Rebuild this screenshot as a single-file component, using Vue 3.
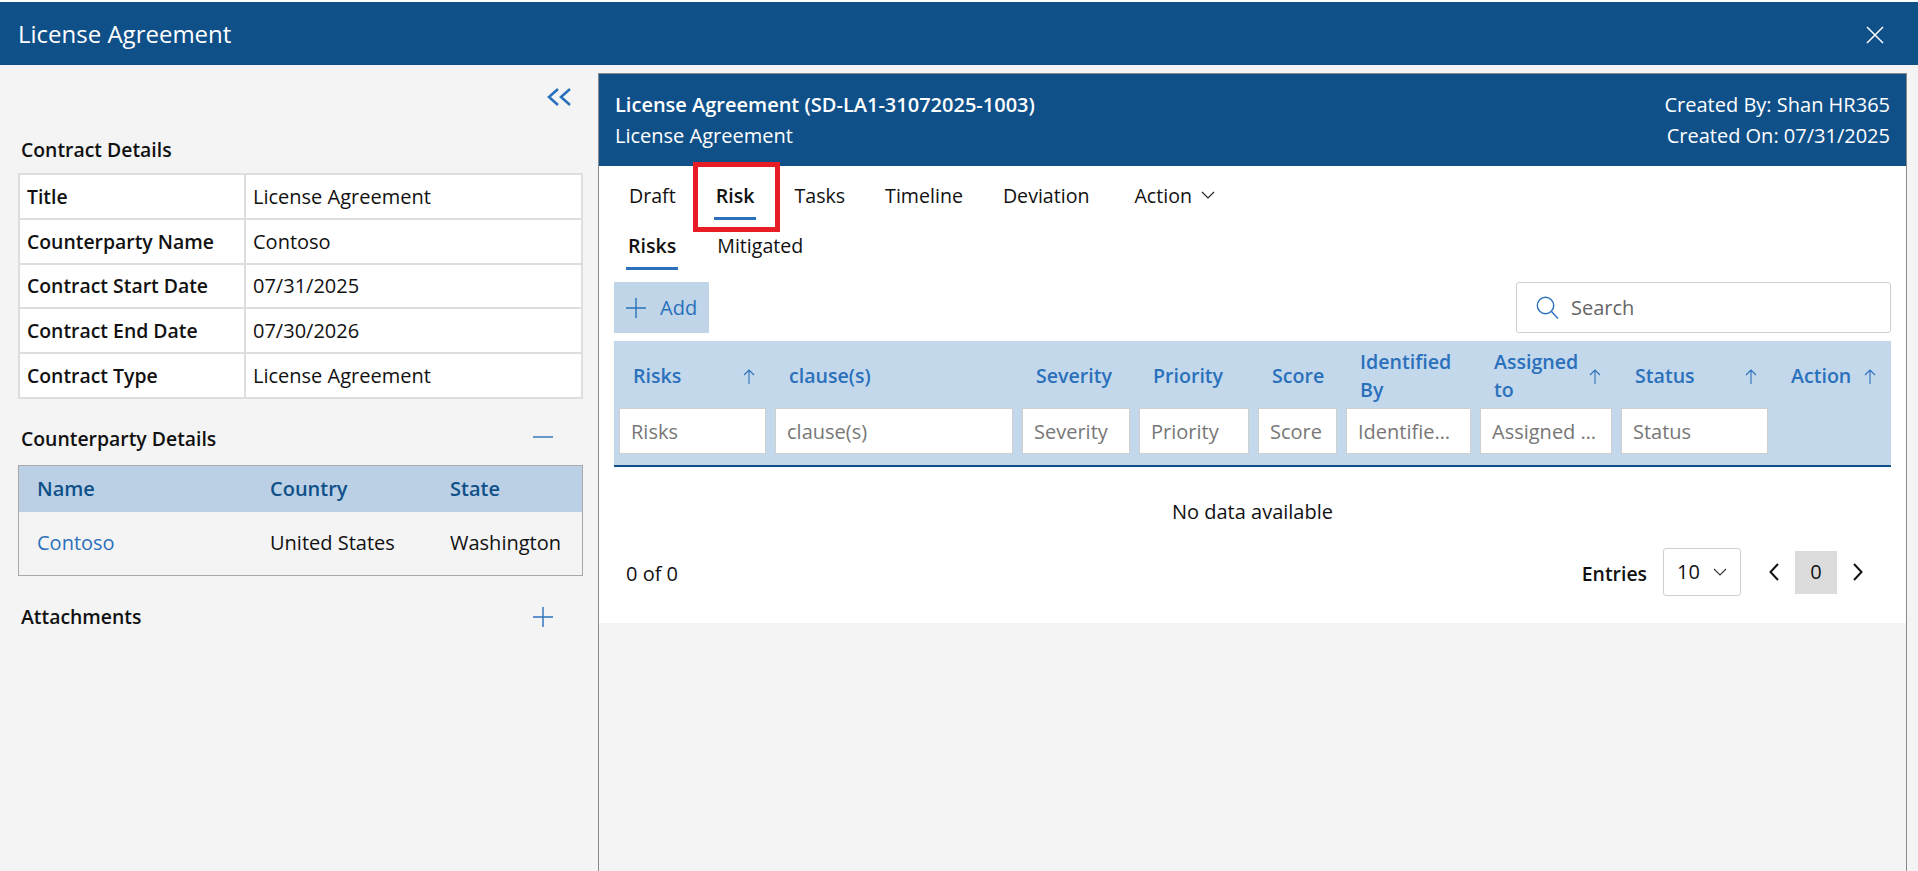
<script setup>
const contractRows = [
  { label: 'Title', value: 'License Agreement' },
  { label: 'Counterparty Name', value: 'Contoso' },
  { label: 'Contract Start Date', value: '07/31/2025' },
  { label: 'Contract End Date', value: '07/30/2026' },
  { label: 'Contract Type', value: 'License Agreement' },
];

const tabs = ['Draft', 'Risk', 'Tasks', 'Timeline', 'Deviation'];

const columns = [
  { label: 'Risks', filter: 'Risks', sort: true },
  { label: 'clause(s)', filter: 'clause(s)' },
  { label: 'Severity', filter: 'Severity' },
  { label: 'Priority', filter: 'Priority' },
  { label: 'Score', filter: 'Score' },
  { label: 'Identified By', filter: 'Identified By' },
  { label: 'Assigned to', filter: 'Assigned to', sort: true },
  { label: 'Status', filter: 'Status', sort: true },
  { label: 'Action', sort: true },
];
</script>

<template>
  <div class="page">
    <header class="app-bar">
      <span class="app-title">License Agreement</span>
      <svg class="close-icon" width="18" height="18" viewBox="0 0 18 18">
        <path d="M1 1l16 16M17 1L1 17" fill="none" stroke="#fff" stroke-width="1.5" />
      </svg>
    </header>

    <div class="content">
      <aside class="side">
        <div class="collapse-row">
          <svg width="24" height="18" viewBox="0 0 24 18">
            <path d="M11 1L2 9l9 8M23 1l-9 8 9 8" fill="none" stroke="#2a70bb" stroke-width="2.6" />
          </svg>
        </div>

        <h3 class="section-title first">Contract Details</h3>
        <table class="details-table">
          <tbody>
            <tr v-for="row in contractRows" :key="row.label">
              <th>{{ row.label }}</th>
              <td>{{ row.value }}</td>
            </tr>
          </tbody>
        </table>

        <div class="section-row">
          <h3 class="section-title">Counterparty Details</h3>
          <svg width="20" height="20" viewBox="0 0 20 20">
            <path d="M0 8h20" stroke="#2a70bb" stroke-width="1.4" />
          </svg>
        </div>
        <table class="party-table">
          <thead>
            <tr>
              <th class="col-name">Name</th>
              <th class="col-country">Country</th>
              <th>State</th>
            </tr>
          </thead>
          <tbody>
            <tr>
              <td class="party-link">Contoso</td>
              <td>United States</td>
              <td>Washington</td>
            </tr>
          </tbody>
        </table>

        <div class="section-row attachments">
          <h3 class="section-title">Attachments</h3>
          <svg width="20" height="20" viewBox="0 0 20 20">
            <path d="M0 10h20M10 0v20" stroke="#2a70bb" stroke-width="1.4" />
          </svg>
        </div>
      </aside>

      <main class="panel">
        <div class="panel-head">
          <div>
            <div class="doc-title">License Agreement (SD-LA1-31072025-1003)</div>
            <div>License Agreement</div>
          </div>
          <div class="doc-meta">
            <div>Created By: Shan HR365</div>
            <div>Created On: 07/31/2025</div>
          </div>
        </div>

        <div class="panel-body">
          <nav class="tabs">
            <span v-for="tab in tabs" :key="tab" class="tab" :class="{ active: tab === 'Risk' }">{{ tab }}</span>
            <span class="tab tab-action">
              Action
              <svg class="action-caret" width="14" height="9" viewBox="0 0 14 9">
                <path d="M1 1l6 6 6-6" fill="none" stroke="#222" stroke-width="1.1" />
              </svg>
            </span>
            <!-- red annotation from the screenshot -->
            <span class="callout"></span>
          </nav>

          <nav class="sub-tabs">
            <span class="tab active">Risks</span>
            <span class="tab">Mitigated</span>
          </nav>

          <div class="toolbar">
            <button class="add-btn">
              <svg width="20" height="20" viewBox="0 0 20 20">
                <path d="M0 10h20M10 0v20" stroke="#2a70bb" stroke-width="1.4" />
              </svg>
              <span>Add</span>
            </button>
            <div class="search">
              <svg width="23" height="23" viewBox="0 0 23 23">
                <circle cx="9.5" cy="9.5" r="8.2" fill="none" stroke="#2a70bb" stroke-width="1.4" />
                <path d="M15.5 15.5l6.5 7" stroke="#2a70bb" stroke-width="1.4" />
              </svg>
              <input type="text" placeholder="Search" />
            </div>
          </div>

          <div class="grid-head">
            <div v-for="col in columns" :key="col.label" class="head-cell">
              <span class="head-label">{{ col.label }}</span>
              <svg v-if="col.sort" class="sort-icon" width="12" height="15" viewBox="0 0 12 15">
                <path d="M6 15V1M1 6l5-5 5 5" fill="none" stroke="#2a70bb" stroke-width="1.1" />
              </svg>
            </div>
            <div v-for="col in columns" :key="col.label + '-filter'" class="filter-cell">
              <input v-if="col.filter" type="text" :placeholder="col.filter" />
            </div>
          </div>

          <div class="no-data">No data available</div>

          <div class="pager">
            <span class="count">0 of 0</span>
            <span class="entries">Entries</span>
            <div class="page-size">
              <span>10</span>
              <svg width="14" height="9" viewBox="0 0 14 9">
                <path d="M1 1l6 6 6-6" fill="none" stroke="#333" stroke-width="1.1" />
              </svg>
            </div>
            <svg class="page-arrow prev" width="10" height="18" viewBox="0 0 10 18">
              <path d="M9 1L1.5 9 9 17" fill="none" stroke="#111" stroke-width="2" />
            </svg>
            <span class="page-no">0</span>
            <svg class="page-arrow next" width="10" height="18" viewBox="0 0 10 18">
              <path d="M1 1l7.5 8L1 17" fill="none" stroke="#111" stroke-width="2" />
            </svg>
          </div>
        </div>
      </main>
    </div>
  </div>
</template>

<style>
html,
body {
  margin: 0;
  background: #f4f4f4;
}
</style>

<style scoped>
.page {
  height: 871px;
  padding-top: 2px;
  box-sizing: border-box;
  overflow: hidden;
  display: flex;
  flex-direction: column;
  background: #fff;
  font-family: "Open Sans", "Noto Sans", sans-serif;
  font-size: 20px;
  line-height: 30px;
  color: #111;
}

.app-bar {
  height: 63px;
  flex: none;
  display: flex;
  align-items: center;
  justify-content: space-between;
  padding: 0 34px 0 18px;
  background: #0f5089;
  color: #fff;
}

.app-title {
  font-size: 24px;
}

.close-icon {
  margin-top: 2px;
}

.content {
  flex: 1;
  display: flex;
  background: #f4f4f4;
  min-height: 0;
}

.side {
  width: 598px;
  flex: none;
  box-sizing: border-box;
  padding: 23px 15px 0 18px;
}

.collapse-row {
  display: flex;
  justify-content: flex-end;
  padding-right: 12px;
  height: 18px;
}

.section-title {
  margin: 0;
  padding-left: 3px;
  font-size: 19.4px;
  font-weight: 600;
  color: #111;
}

.section-title.first {
  margin: 29px 0 8px;
}

.section-row {
  display: flex;
  align-items: center;
  justify-content: space-between;
  padding-right: 30px;
  margin-top: 25px;
  margin-bottom: 11px;
}

.section-row.attachments {
  margin-top: 26px;
}

.details-table {
  width: 100%;
  border-collapse: collapse;
  table-layout: fixed;
  background: #fff;
}

.details-table th,
.details-table td {
  height: 41.8px;
  padding: 1px 7px 0;
  border: 2px solid #dedede;
  text-align: left;
  font-weight: 400;
}

.details-table th {
  width: 210px;
  font-size: 19.4px;
  font-weight: 600;
}

.party-table {
  width: 100%;
  height: 111px;
  border-collapse: collapse;
  table-layout: fixed;
  border: 1px solid #a9a9a9;
}

.party-table th {
  height: 46px;
  padding: 0 0 0 18px;
  text-align: left;
  font-weight: 600;
  color: #0f5089;
  background: #bbd0e5;
}

.party-table td {
  padding: 0 0 0 18px;
}

.party-table .col-name {
  width: 215px;
}

.party-table .col-country {
  width: 162px;
}

.party-link {
  color: #2a70bb;
}

.panel {
  width: 1309px;
  flex: none;
  margin-top: 8px;
  box-sizing: border-box;
  border: 1px solid #8a8a8a;
  border-bottom: 0;
}

.panel-head {
  height: 92px;
  box-sizing: border-box;
  padding: 15px 16px 0;
  display: flex;
  justify-content: space-between;
  background: #0f5089;
  color: #fff;
  line-height: 31px;
}

.doc-title {
  font-weight: 600;
}

.doc-meta {
  text-align: right;
}

.panel-body {
  position: relative;
  height: 457px;
  box-sizing: border-box;
  background: #fff;
}

.tabs {
  position: relative;
  display: flex;
  gap: 36px;
  padding: 15px 0 0 28px;
  font-size: 19.6px;
}

.sub-tabs {
  display: flex;
  gap: 37px;
  padding: 11px 0 0 27px;
  font-size: 19.6px;
}

.tab {
  padding: 0 2px 6px;
  border-bottom: 3px solid transparent;
  white-space: nowrap;
}

.tab.active {
  font-weight: 600;
  border-bottom-color: #2a70bb;
}

.tab-action {
  margin-left: 5px;
}

.action-caret {
  margin-left: 4px;
  vertical-align: 3px;
}

.callout {
  position: absolute;
  left: 94px;
  top: -4px;
  width: 87px;
  height: 70px;
  box-sizing: border-box;
  border: 5px solid #e81c24;
}

.toolbar {
  display: flex;
  justify-content: space-between;
  margin-top: 12px;
  padding: 0 15px;
}

.add-btn {
  width: 95px;
  height: 51px;
  display: flex;
  align-items: center;
  gap: 14px;
  padding: 0 0 0 12px;
  border: 0;
  background: #c1d5e9;
  color: #2a70bb;
  font: inherit;
}

.search {
  width: 375px;
  height: 51px;
  box-sizing: border-box;
  display: flex;
  align-items: center;
  gap: 12px;
  padding-left: 19px;
  background: #fff;
  border: 1px solid #cfcfcf;
  border-radius: 3px;
}

.search input {
  flex: 1;
  min-width: 0;
  border: 0;
  outline: 0;
  padding: 0;
  font: inherit;
  background: transparent;
}

.search input::placeholder {
  color: #666;
}

.grid-head {
  display: grid;
  grid-template-columns: 156px 247px 117px 119px 88px 134px 141px 156px 119px;
  grid-template-rows: 67px 46px;
  height: 126px;
  box-sizing: border-box;
  margin: 8px 15px 0;
  background: #c4d8ec;
  border-bottom: 2px solid #0f5089;
}

.head-cell {
  display: flex;
  align-items: center;
  justify-content: space-between;
  box-sizing: border-box;
  padding: 3px 15px 0 19px;
  color: #2a70bb;
  font-size: 19.6px;
  font-weight: 600;
  line-height: 28px;
}

.sort-icon {
  flex: none;
}

.filter-cell {
  padding: 0 4px 0 5px;
}

.filter-cell input {
  width: 100%;
  height: 46px;
  box-sizing: border-box;
  padding: 0 12px 0 11px;
  border: 1px solid #cfcfcf;
  outline: 0;
  background: #fff;
  font: inherit;
  text-overflow: ellipsis;
}

.filter-cell input::placeholder {
  color: #777;
}

.no-data {
  margin-top: 30px;
  text-align: center;
}

.pager {
  display: flex;
  align-items: center;
  height: 48px;
  margin-top: 21px;
  padding: 0 43px 0 27px;
}

.count {
  margin-right: auto;
  padding-top: 3px;
}

.entries {
  font-size: 19.4px;
  font-weight: 600;
  margin-right: 16px;
  padding-top: 3px;
}

.page-size {
  width: 78px;
  height: 48px;
  box-sizing: border-box;
  display: flex;
  align-items: center;
  justify-content: space-between;
  padding: 0 13px;
  border: 1px solid #cfcfcf;
  border-radius: 3px;
}

.page-arrow {
  flex: none;
}

.page-arrow.prev {
  margin-left: 28px;
}

.page-no {
  width: 42px;
  height: 43px;
  margin: 0 16px;
  display: flex;
  align-items: center;
  justify-content: center;
  background: #dcdcdc;
}
</style>
